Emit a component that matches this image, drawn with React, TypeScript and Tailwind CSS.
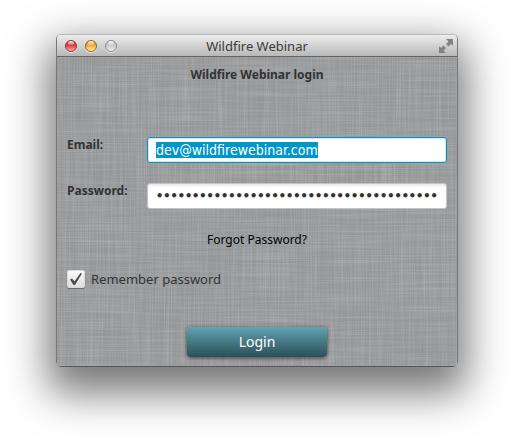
import { useEffect, useRef, useState } from "react";

function TrafficLight({ label, className }: { label: string; className: string }) {
  return (
    <button
      type="button"
      aria-label={label}
      className={"relative size-3 overflow-hidden rounded-full border shadow-[0_1px_0_rgba(255,255,255,0.6)] " + className}
    >
      <span className="absolute inset-x-0.5 top-0 h-1 rounded-full bg-linear-to-b from-white/90 to-white/20" />
    </button>
  );
}

function TitleBar() {
  return (
    <header className="grid h-[22px] grid-cols-[1fr_auto_1fr] items-center border-b border-[#686464] bg-linear-to-b from-[#ececec] to-[#b8b8b8] px-2">
      <div className="flex gap-2">
        <TrafficLight label="Close" className="border-[#8e3434] bg-linear-to-b from-[#c93a3a] via-[#e04444] to-[#ffb0a6]" />
        <TrafficLight label="Minimize" className="border-[#95652a] bg-linear-to-b from-[#cf8526] via-[#ecb63c] to-[#fff0a0]" />
        <TrafficLight label="Zoom" className="border-[#8c8c8c] bg-linear-to-b from-[#b4b4b4] via-[#cecece] to-[#ececec]" />
      </div>
      <h1 className="text-[13px] leading-5 text-[#3c3c3c]">Wildfire Webinar</h1>
      <button type="button" aria-label="Enter full screen" className="-mr-1 justify-self-end">
        <svg width="14" height="14" viewBox="0 0 14 14" fill="#828282">
          <path d="M7 0h7v7l-2-2-2.500 2.500-2.500-2.500 2.500-2.500z" />
          <path d="M0 7l2 2 2.500-2.500 2.500 2.500-2.500 2.500 2.500 2.500h-7z" />
        </svg>
      </button>
    </header>
  );
}

function LinenTexture() {
  return (
    <svg aria-hidden="true" className="absolute inset-0 -z-10 size-full">
      <filter id="weft" x="0" y="0" width="100%" height="100%" colorInterpolationFilters="sRGB">
        <feTurbulence type="fractalNoise" baseFrequency="0.012 0.7" numOctaves="3" seed="4" />
        <feColorMatrix values="0 0 0 0 1  0 0 0 0 1  0 0 0 0 1  1.800 0 0 0 -0.600" />
      </filter>
      <filter id="warp" x="0" y="0" width="100%" height="100%" colorInterpolationFilters="sRGB">
        <feTurbulence type="fractalNoise" baseFrequency="0.7 0.012" numOctaves="3" seed="9" />
        <feColorMatrix values="0 0 0 0 1  0 0 0 0 1  0 0 0 0 1  1.800 0 0 0 -0.600" />
      </filter>
      <rect width="100%" height="100%" fill="#939597" />
      <rect width="100%" height="100%" filter="url(#weft)" opacity="0.15" />
      <rect width="100%" height="100%" filter="url(#warp)" opacity="0.15" />
    </svg>
  );
}

const labelClass = "w-20 shrink-0 pb-2.5 text-xs leading-4 font-bold text-[#333333]";

export default function App() {
  const emailRef = useRef<HTMLInputElement>(null);
  const [email, setEmail] = useState("dev@wildfirewebinar.com");
  const [password, setPassword] = useState("x".repeat(39));
  const [remember, setRemember] = useState(true);

  useEffect(() => {
    emailRef.current?.focus();
    emailRef.current?.select();
  }, []);

  return (
    <main className="min-h-screen bg-white px-14 py-[34px] font-['Noto_Sans',sans-serif]">
      <section className="rounded-[5px] shadow-[0_18px_42px_8px_rgba(0,0,0,0.54)]">
        <div className="overflow-hidden rounded-[5px] border border-[#77787a] border-t-[#b9b9b9] border-b-[#56575b]">
          <TitleBar />
          <form
            className="relative isolate flex flex-col px-2.5 pt-2 pb-[9px]"
            onSubmit={(event) => event.preventDefault()}
          >
            <LinenTexture />
            <h2 className="text-center text-xs leading-5 font-bold text-[#333333]">Wildfire Webinar login</h2>

            <div className="mt-[52px] flex items-center">
              <label htmlFor="email" className={labelClass}>Email:</label>
              <input
                id="email"
                ref={emailRef}
                type="email"
                value={email}
                onChange={(event) => setEmail(event.target.value)}
                className="h-[26px] min-w-0 grow rounded-[3px] border border-[#0096c9] bg-white px-2 font-['DejaVu_Sans_Condensed','Noto_Sans',sans-serif] text-sm leading-4 text-[#333333] shadow-[inset_0_0_0_1px_#cfeaf6] outline-none selection:bg-[#0096c9] selection:text-white"
              />
            </div>

            <div className="mt-5 flex items-center">
              <label htmlFor="password" className={labelClass}>Password:</label>
              <input
                id="password"
                type="password"
                value={password}
                onChange={(event) => setPassword(event.target.value)}
                className="h-[26px] min-w-0 grow rounded-[3px] border border-[#c4c4c4] bg-white px-2 font-['DejaVu_Sans_Mono',monospace] text-xs leading-4 font-bold text-[#333333] shadow-[inset_0_2px_2px_rgba(0,0,0,0.08)] outline-none"
              />
            </div>

            <a href="#forgot" className="mt-[21px] self-center text-xs leading-5 text-black">Forgot Password?</a>

            <label className="mt-[19px] flex items-center gap-1.5 self-start text-[13px] leading-5 text-[#333333]">
              <span className="relative flex">
                <input
                  type="checkbox"
                  checked={remember}
                  onChange={(event) => setRemember(event.target.checked)}
                  className="peer size-[18px] appearance-none rounded-[2px] border border-[#d8d8d8] bg-linear-to-b from-[#fafafa] to-[#dedede] shadow-[0_1px_1px_rgba(0,0,0,0.35)]"
                />
                <svg
                  aria-hidden="true"
                  viewBox="0 0 18 18"
                  className="pointer-events-none absolute inset-0 hidden size-[18px] peer-checked:block"
                >
                  <path d="M3 9.500 5 8.500 7.500 11.500 13.500 3 15 3.500 8 15 6.500 15z" fill="#4a4a4a" />
                </svg>
              </span>
              Remember password
            </label>

            <button
              type="submit"
              className="mt-[38px] h-[30px] w-[140px] self-center rounded-[4px] bg-linear-to-b from-[#62a3b1] to-[#2a5059] text-sm leading-5 text-white shadow-[0_1px_4px_rgba(0,0,0,0.6)]"
            >
              Login
            </button>
          </form>
        </div>
      </section>
    </main>
  );
}
